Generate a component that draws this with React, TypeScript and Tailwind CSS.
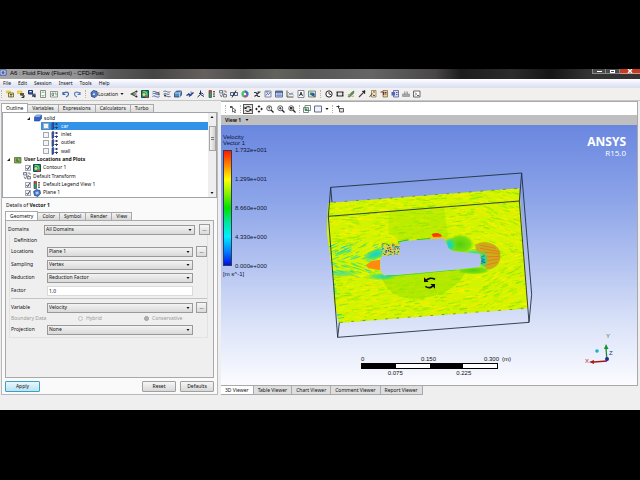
import { clsx } from 'clsx';
import type { ReactNode } from 'react';

const MENU_ITEMS = ['File', 'Edit', 'Session', 'Insert', 'Tools', 'Help'];
const OUTLINE_TABS = ['Outline', 'Variables', 'Expressions', 'Calculators', 'Turbo'];
const DETAILS_TABS = ['Geometry', 'Color', 'Symbol', 'Render', 'View'];
const VIEWER_TABS = ['3D Viewer', 'Table Viewer', 'Chart Viewer', 'Comment Viewer', 'Report Viewer'];

const BLUE = '#2f55a8';
const NAVY = '#1c2f66';

const Icon = ({ children, className }: { children: ReactNode; className?: string }) => (
  <svg
    viewBox="0 0 16 16"
    fill="none"
    strokeWidth={2}
    className={clsx('h-2 w-2 shrink-0', className)}
    aria-hidden="true"
  >
    {children}
  </svg>
);

const ICONS: Record<string, ReactNode> = {
  loadResults: (
    <>
      <path d="M1 2h8v4H1z" fill="#f2d94e" stroke="#c8a92c" strokeWidth={1} />
      <path d="M5 6h10v8H5z" fill="#f7e98b" stroke="#55502c" strokeWidth={1.5} />
      <path d="M8 9h5M10 9v5" stroke="#333" strokeWidth={1.5} />
    </>
  ),
  loadState: (
    <>
      <path d="M1 2h9v5H1z" fill="#f2d94e" stroke="#c8a92c" strokeWidth={1} />
      <path d="M6 6h8v5H6z" fill="#5b5a3a" />
      <path d="M9 10l5 4M14 10v5H9" stroke="#333" />
    </>
  ),
  saveState: (
    <>
      <path d="M1 1h8v7H1z" fill="#4a5fb0" stroke={NAVY} />
      <path d="M3 2h4v2H3z" fill="#fff" />
      <path d="M8 7h7v7H8z" fill="#5d7290" />
      <path d="M9 9l5 5M14 9v6" stroke="#222" strokeWidth={1.5} />
    </>
  ),
  refresh: (
    <>
      <path d="M3 1h10v14H3z" fill="#fff" stroke="#5c6f62" strokeWidth={1.5} />
      <path d="M5 6c2-3 5-2 6 0M11 10c-2 3-5 2-6 0" stroke="#2f8042" strokeWidth={1.5} />
    </>
  ),
  publish: (
    <>
      <path d="M1 3h14v11H1z" fill="#fff" stroke="#697a70" strokeWidth={1.5} />
      <path d="M4 6h3v5H4zM9 6h3v5" stroke="#437153" strokeWidth={1.5} />
    </>
  ),
  undo: <path d="M2 4v5h5M2 9c2-6 11-6 11-1 0 3-2 5-5 6" stroke="#3a66b5" strokeWidth={2.4} />,
  redo: <path d="M14 4v5H9M14 9C12 3 3 3 3 8c0 3 2 5 5 6" stroke="#5a80bd" strokeWidth={2.4} />,
  location: (
    <>
      <path d="M2 5l5-4 7 2 1 7-5 5-7-2z" fill="#5b8fdd" stroke={NAVY} strokeWidth={1.6} />
      <path d="M5 6h6v5H5z" fill="#d5e5fb" stroke={BLUE} strokeWidth={1.3} />
    </>
  ),
  vector: (
    <>
      <path d="M2 8l10-5M2 8l10 5M2 8h11" stroke="#222" strokeWidth={1.8} />
      <circle cx="13" cy="3" r="2" fill="#2b2b2b" />
      <circle cx="13" cy="13" r="2" fill="#2b2b2b" />
      <circle cx="3" cy="8" r="2" fill="#2f8042" />
    </>
  ),
  contour: (
    <>
      <path d="M1 1h14v14H1z" fill="#1d8c86" stroke="#144b4e" />
      <path d="M4 3c6-1 8 3 8 8" stroke="#7fd36b" strokeWidth={2.5} />
      <circle cx="6" cy="9" r="3" fill="#efda4c" />
      <path d="M9 12h5v3H9z" fill="#d64d2a" />
    </>
  ),
  streamline: (
    <>
      <path d="M1 4c5-4 8 4 14 0M1 8c5-4 8 4 14 0M1 13c5-4 8 4 14 0" stroke={BLUE} strokeWidth={1.8} />
      <path d="M7 6h7v5" stroke="#333" strokeWidth={1.5} />
    </>
  ),
  particle: (
    <>
      <path d="M1 3c5-3 8 4 14 0M1 8c5-3 8 3 12 0M5 13c3-2 6 2 10 0" stroke="#40568f" strokeWidth={1.7} />
      <circle cx="4" cy="11" r="2" fill="#333" />
    </>
  ),
  volume: (
    <>
      <path d="M1 6l4-4h10v8l-4 4H1z" fill="#4d90c8" stroke={NAVY} strokeWidth={1.4} />
      <path d="M1 6h10v8M11 6l4-4" stroke="#e4f2ff" strokeWidth={1.2} />
    </>
  ),
  text: (
    <>
      <path d="M1 11l5-3 2 3 7-6" stroke={NAVY} strokeWidth={2.4} />
      <path d="M5 6l2 8M10 3l1 8" stroke={BLUE} strokeWidth={1.8} />
    </>
  ),
  coordFrame: <path d="M7 1v8l7 4M7 9l-6 5M4 7l6-1M10 6l3 3" stroke={NAVY} strokeWidth={2} />,
  legend: (
    <>
      <path d="M2 1h5v5H2z" fill="#d3432d" />
      <path d="M2 6h5v9H2z" fill="#27a06c" />
      <path d="M2 1h5v14H2z" stroke="#333" strokeWidth={1.2} />
      <path d="M10 3h4M12 2v11M10 8h3M10 13h4" stroke="#444" strokeWidth={1.5} />
    </>
  ),
  transform: (
    <>
      <path d="M1 1h6v5H1zM9 9h6v5H9z" fill="#dfe4ee" stroke="#4b526b" strokeWidth={1.4} />
      <path d="M9 2h5v4M2 9l3 5 3-8M9 6l3 2" stroke="#5d5d6d" strokeWidth={1.5} />
    </>
  ),
  clip: (
    <>
      <path d="M1 5h6v6H1zM9 5h6v6H9z" fill="#e5ebf5" stroke={NAVY} strokeWidth={1.5} />
      <path d="M12 1L4 15" stroke="#222" strokeWidth={1.8} />
    </>
  ),
  colorMap: (
    <>
      <circle cx="8" cy="8" r="7" fill="#3cb4aa" />
      <path d="M8 8V1a7 7 0 016 10z" fill="#4066cf" />
      <path d="M8 8l6 3a7 7 0 01-9 3z" fill="#c9408c" />
      <path d="M8 8L5 14A7 7 0 018 1z" fill="#4fc063" />
      <circle cx="8" cy="8" r="2.5" fill="#f3f3f3" />
    </>
  ),
  variable: <path d="M2 5h4l4 8h4M13 4L3 13M9 4h6" stroke="#35384b" strokeWidth={2.2} />,
  expression: (
    <>
      <path d="M2 2h12v12H2z" fill="#eef1fa" stroke="#5a6894" strokeWidth={1.5} />
      <path d="M4 11l3-4 2 2 4-5M4 4h5" stroke="#34498d" strokeWidth={1.6} />
    </>
  ),
  table: (
    <>
      <path d="M1 2h14v12H1z" fill="#e8effa" stroke="#34508f" strokeWidth={1.6} />
      <path d="M1 4h14" stroke="#34508f" strokeWidth={3} />
      <path d="M6 4v10M10 4v10M1 8h14M1 11h14" stroke="#5878b5" strokeWidth={1.2} />
    </>
  ),
  chart: (
    <>
      <path d="M2 1v13h13" stroke="#333" strokeWidth={1.6} />
      <path d="M4 4l4 4 3-2 4 5M4 11c4-5 6 1 10-6" stroke="#617c9e" strokeWidth={1.5} />
    </>
  ),
  comment: (
    <>
      <path d="M2 1h12v14H2z" fill="#fff" stroke="#596380" strokeWidth={1.5} />
      <path d="M5 12l3-8 3 8M6 9h4" stroke="#222" strokeWidth={1.7} />
    </>
  ),
  figure: (
    <>
      <path d="M1 2h14v12H1z" fill="#cfe0ee" stroke="#4e7660" strokeWidth={1.5} />
      <path d="M4 5h5v5H4z" fill="#2f9b4b" />
      <circle cx="10" cy="9" r="3.5" fill="#3357a8" />
      <path d="M11 11h3v3h-3z" fill="#ce3f2e" />
    </>
  ),
  timestep: (
    <>
      <circle cx="8" cy="8" r="6.3" fill="#fff" stroke="#222" strokeWidth={2} />
      <path d="M8 4v4l4 1" stroke="#222" strokeWidth={1.8} />
    </>
  ),
  animation: (
    <>
      <path d="M1 3h14v10H1z" fill="#2d2d2d" />
      <path d="M4 5h8v6H4z" fill="#e7e7e7" />
      <path d="M1 8h2M13 8h2" stroke="#fff" strokeWidth={1.5} />
    </>
  ),
  quickEdit: (
    <>
      <path d="M2 13l8-9 4-2-1 5-8 7z" fill="#5f9360" stroke="#375337" strokeWidth={1} />
      <path d="M2 8l3 4M9 13l5-1" stroke="#c9a634" strokeWidth={2} />
    </>
  ),
  probe: (
    <>
      <path d="M2 14l8-8" stroke="#444" strokeWidth={2.2} />
      <path d="M9 2l5 5M11 5l3-4" stroke="#222" strokeWidth={3} />
    </>
  ),
  report: (
    <>
      <path d="M5 1h9v13H5z" fill="#f5e7c0" stroke="#7b6c45" strokeWidth={1.4} />
      <path d="M1 14l5-7 2 2M8 4h4M8 11h4" stroke="#5a4930" strokeWidth={1.8} />
    </>
  ),
  reportMacro: (
    <>
      <path d="M6 1h9v13H6z" fill="#e9d4a4" stroke="#705b3d" strokeWidth={1.4} />
      <path d="M1 4h6v6M9 5h4M9 8h4" stroke="#6b3228" strokeWidth={2} />
    </>
  ),
  reportView: (
    <>
      <path d="M5 1h10v13H5z" fill="#d8def6" stroke="#47549b" strokeWidth={1.5} />
      <path d="M1 4h7v7H1z" fill="#5365be" />
      <path d="M10 5h3M10 9h3" stroke="#333" strokeWidth={1.5} />
    </>
  ),
  print: (
    <>
      <path d="M1 8h14v5H1z" fill="#a9a9a9" stroke="#777" strokeWidth={1} />
      <path d="M5 8V3M8 8V3M11 8V3" stroke="#888" strokeWidth={1.5} />
    </>
  ),
  command: (
    <>
      <path d="M1 2h13v12H1z" fill="#fff" stroke="#444" strokeWidth={1.6} />
      <path d="M4 5l3 3-3 3M8 11h4" stroke="#333" strokeWidth={1.5} />
    </>
  ),
  select: (
    <>
      <path d="M2 2h5v4H2z" fill="#555" />
      <path d="M7 5l7 6-3 .5 2 3.500-2 .5-1.500-3L7 14z" fill="#fff" stroke="#333" strokeWidth={1.4} />
    </>
  ),
  rotate: (
    <>
      <path d="M3 7c0-4 7-5 10-2M13 9c0 4-7 5-10 2" stroke="#111" strokeWidth={2} />
      <path d="M1 3v5h5zM15 13V8h-5z" fill="#111" />
    </>
  ),
  pan: (
    <path
      d="M8 0l3 4H9v1H7V4H5zM8 16l3-4H9v-1H7v1H5zM0 8l4-3v2h1v2H4v2zM16 8l-4-3v2h-1v2h1v2z"
      fill="#222"
    />
  ),
  zoom: (
    <>
      <circle cx="6.500" cy="6.500" r="5" fill="#fff" stroke="#444" strokeWidth={1.7} />
      <path d="M10 10l5 5" stroke="#222" strokeWidth={2.6} />
      <path d="M6.500 4v5M5 5.500l1.500-2 1.500 2" stroke="#222" strokeWidth={1.4} />
    </>
  ),
  zoomIn: (
    <>
      <circle cx="6.500" cy="6.500" r="5" fill="#fff" stroke="#444" strokeWidth={1.7} />
      <path d="M10 10l5 5" stroke="#222" strokeWidth={2.6} />
      <path d="M6.500 4v5M4 6.500h5" stroke="#222" strokeWidth={1.6} />
    </>
  ),
  zoomFit: (
    <>
      <circle cx="6.500" cy="6.500" r="5" fill="#fff" stroke="#444" strokeWidth={1.7} />
      <path d="M10 10l5 5" stroke="#222" strokeWidth={2.6} />
      <path d="M4 4h5v5H4z" fill="#333" />
    </>
  ),
  highlight: (
    <>
      <path d="M4 1h11v10H4zM1 5h10v10H1z" stroke="#537563" strokeWidth={1.6} />
      <path d="M4 7h5v5H4z" fill="#3f8a5e" />
    </>
  ),
  viewport: <path d="M1 2h14v12H1z" fill="#f0f2fa" stroke="#555d7c" strokeWidth={1.8} />,
  deform: (
    <>
      <path d="M1 3h6M5 1v5l3 3" stroke="#333" strokeWidth={2} />
      <path d="M7 7h8v7H7z" fill="#ddd" stroke="#444" strokeWidth={1.7} />
    </>
  ),
  solid: (
    <>
      <path d="M1 6l4-4h10v7l-4 5H1z" fill="#2f62c4" stroke="#1b3d86" strokeWidth={1.2} />
      <path d="M1 6h10l4-4H5z" fill="#84aaf0" />
    </>
  ),
  boundary: (
    <>
      <path d="M2 2l3-1v13l-3 1z" fill="#3b62c4" stroke={NAVY} strokeWidth={1.4} />
      <path d="M7 4h7M7 11h7M11 2v4M11 9v5" stroke="#33406e" strokeWidth={2} />
    </>
  ),
  userLocations: (
    <>
      <path d="M1 3h13v11H1z" fill="#8bad4e" stroke="#4d5f2b" strokeWidth={1.4} />
      <circle cx="8" cy="8" r="4" fill="#3c7b38" />
      <path d="M7 6h3v4" stroke="#dbe9a8" strokeWidth={1.4} />
    </>
  ),
  plane: (
    <>
      <path d="M1 5l6-4 7 2 1 6-5 6-7-2z" fill="#3f78cf" stroke={NAVY} strokeWidth={1.2} />
      <path d="M5 6l6-1v5l-5 1z" fill="#a9cbf5" />
    </>
  ),
};

const Caret = ({ className }: { className?: string }) => (
  <svg viewBox="0 0 6 4" className={clsx('h-[2px] w-[4px]', className)} aria-hidden="true">
    <path d="M0 0h6L3 4z" fill="#111" />
  </svg>
);

const Separator = () => <span className="h-2 w-px shrink-0 border-l border-dotted border-[#b4b4b4]" />;

const ToolGroup = ({ names }: { names: string[] }) => (
  <div className="flex items-center gap-[3px]">
    {names.map((name) => (
      <button
        key={name}
        type="button"
        aria-label={name}
        className={clsx('flex', name === 'rotate' && 'bg-[#e6e6e6] outline outline-[#555]')}
      >
        <Icon>{ICONS[name]}</Icon>
      </button>
    ))}
  </div>
);

const TitleBar = () => (
  <header className="flex h-[10px] items-start justify-between overflow-hidden bg-[linear-gradient(90deg,#a5a5a8_0%,#929294_12%,#5b5b5d_17%,#454545_24%,#66605e_32%,#4d4d4d_38%,#63635c_43%,#555_48%,#656565_58%,#494747_68%,#1d1d1d_72%,#2c2c2c_80%,#151515_86%,#333_92%)]">
    <div className="flex h-[7px] items-center gap-[3px]">
      <Icon className="h-[7px] w-[7px]">
        <path d="M0 2h14v12H0z" fill="#c9d2ee" stroke="#39539c" />
        <circle cx="7" cy="8" r="3.500" fill="#4664b4" />
      </Icon>
      <h1 className="font-['Liberation_Sans',sans-serif] text-[6px] leading-[8px] whitespace-nowrap text-black">
        A6 : Fluid Flow (Fluent) - CFD-Post
      </h1>
    </div>
    <div className="flex h-[5px]">
      <button
        type="button"
        aria-label="Minimize"
        className="flex w-[14px] items-end justify-center border border-t-0 border-[#8a8a8a] bg-[#4b4b4b]"
      >
        <span className="mb-px h-px w-[5px] bg-white" />
      </button>
      <button
        type="button"
        aria-label="Maximize"
        className="flex w-[14px] items-center justify-center border border-t-0 border-l-0 border-[#8a8a8a] bg-[#4b4b4b]"
      >
        <span className="h-[3px] w-[5px] border border-white" />
      </button>
      <button
        type="button"
        aria-label="Close"
        className="flex w-5 items-center justify-center border-b border-[#d59a8c] bg-[#c43a22]"
      >
        <svg viewBox="0 0 6 4" className="h-[4px] w-[6px]" aria-hidden="true">
          <path d="M1 0l4 4M5 0L1 4" stroke="#fff" strokeWidth="1.400" />
        </svg>
      </button>
    </div>
  </header>
);

const MenuBar = () => (
  <nav className="flex h-[9px] items-center gap-[7px] bg-[linear-gradient(#ffffff,#eef0fa_40%,#d9dff1)] pl-[3px]">
    {MENU_ITEMS.map((item) => (
      <button key={item} type="button">
        {item}
      </button>
    ))}
  </nav>
);

const MainToolbar = () => (
  <div className="flex h-[13px] items-center gap-[4px] overflow-hidden border-b border-[#c6c6c6] bg-[#f1f0ee] pl-px">
    <Separator />
    <ToolGroup names={['loadResults', 'loadState', 'saveState', 'refresh', 'publish']} />
    <ToolGroup names={['undo', 'redo']} />
    <Separator />
    <button type="button" className="flex items-center">
      <Icon>{ICONS.location}</Icon>
      <span>Location</span>
      <Caret className="mx-[2px]" />
    </button>
    <ToolGroup names={['vector', 'contour', 'streamline', 'particle', 'volume']} />
    <ToolGroup names={['text', 'coordFrame', 'legend', 'transform', 'clip', 'colorMap']} />
    <ToolGroup names={['variable', 'expression', 'table', 'chart', 'comment', 'figure']} />
    <Separator />
    <ToolGroup
      names={[
        'timestep',
        'animation',
        'quickEdit',
        'probe',
        'report',
        'reportMacro',
        'reportView',
        'print',
        'command',
      ]}
    />
  </div>
);

const TabStrip = ({ tabs }: { tabs: string[] }) => (
  <div role="tablist" className="flex h-[9px] items-end">
    {tabs.map((tab, index) => (
      <button
        key={tab}
        type="button"
        role="tab"
        aria-selected={index === 0}
        className={clsx(
          'border border-b-0 border-[#a9a9a9] px-[4px]',
          index === 0 ? 'h-[9px] bg-white' : 'h-[8px] border-l-0 bg-[linear-gradient(#f3f3f3,#d9d9d9)]'
        )}
      >
        {tab}
      </button>
    ))}
  </div>
);

const TREE_ROWS = [
  { label: 'solid', icon: 'solid', indent: 'pl-[24px]', arrow: true },
  { label: 'car', icon: 'boundary', indent: 'pl-[40px]', check: false, selected: true },
  { label: 'inlet', icon: 'boundary', indent: 'pl-[40px]', check: false },
  { label: 'outlet', icon: 'boundary', indent: 'pl-[40px]', check: false },
  { label: 'wall', icon: 'boundary', indent: 'pl-[40px]', check: false },
  { label: 'User Locations and Plots', icon: 'userLocations', indent: 'pl-[4px]', arrow: true, bold: true },
  { label: 'Contour 1', icon: 'contour', indent: 'pl-[22px]', check: true },
  { label: 'Default Transform', icon: 'transform', indent: 'pl-[20px]' },
  { label: 'Default Legend View 1', icon: 'legend', indent: 'pl-[22px]', check: true },
  { label: 'Plane 1', icon: 'plane', indent: 'pl-[22px]', check: true },
];

const TreeRow = ({ row }: { row: (typeof TREE_ROWS)[number] }) => (
  <li className={clsx('relative flex h-[8px] items-center gap-[2px]', row.indent)}>
    {row.selected && <span className="absolute inset-y-0 right-0 left-[38px] bg-[#3292e8]" />}
    {row.arrow && (
      <svg viewBox="0 0 4 4" className="mr-[2px] h-[3px] w-[3px]" aria-hidden="true">
        <path d="M4 0v4H0z" fill="#222" />
      </svg>
    )}
    <label className="relative flex items-center gap-[2px] whitespace-nowrap">
      {row.check !== undefined && (
        <span className="relative flex">
          <input
            type="checkbox"
            defaultChecked={row.check}
            className="peer h-[6px] w-[6px] appearance-none border border-[#a3a8ae] bg-[#f4f4f4]"
          />
          <svg
            viewBox="0 0 6 6"
            className="pointer-events-none absolute inset-0 hidden h-[6px] w-[6px] peer-checked:block"
            aria-hidden="true"
          >
            <path d="M1.500 3l1.200 1.500L4.700 1.200" fill="none" stroke="#2c3d70" />
          </svg>
        </span>
      )}
      <Icon>{ICONS[row.icon]}</Icon>
      <span className={clsx(row.bold && 'font-bold', row.selected && 'text-white')}>{row.label}</span>
    </label>
  </li>
);

const OutlineTree = () => (
  <div className="flex h-[86px] border border-[#a0a3a8] bg-white">
    <ul className="flex min-w-0 flex-1 flex-col justify-between pt-px">
      {TREE_ROWS.map((row) => (
        <TreeRow key={row.label} row={row} />
      ))}
    </ul>
    <div className="flex w-[8px] flex-col items-center bg-[#eeeeee] py-[3px]">
      <Caret className="rotate-180" />
      <span className="mt-[8px] flex h-[25px] w-[7px] items-center justify-center border border-[#a5a5a5] bg-[linear-gradient(90deg,#f5f5f5,#cfcfcf)]">
        <span className="h-[3px] w-[3px] border-y border-[#777]" />
      </span>
      <Caret className="mt-auto" />
    </div>
  </div>
);

interface FieldProps {
  label: string;
  value: string;
  more?: boolean;
  wide?: boolean;
}

const MoreButton = ({ label }: { label: string }) => (
  <button
    type="button"
    aria-label={`${label} options`}
    className="h-[11px] w-[11px] shrink-0 border border-[#9c9c9c] bg-[linear-gradient(#f6f6f6,#dadada)]"
  >
    ...
  </button>
);

const SelectField = ({ label, value, more, wide }: FieldProps) => {
  const id = `field-${label.toLowerCase()}`;
  return (
    <div className="flex h-[11px] items-center">
      <label htmlFor={id} className="w-[36px] shrink-0">
        {label}
      </label>
      <div className="relative flex min-w-0 flex-1">
        <select
          id={id}
          className="h-[10px] w-full appearance-none border border-[#999] bg-[linear-gradient(#f3f3f3,#d9d9d9)] pl-px"
        >
          <option>{value}</option>
        </select>
        <Caret className="pointer-events-none absolute top-[4px] right-[3px]" />
      </div>
      <div className={clsx('flex shrink-0 justify-end', wide ? 'w-[15px]' : 'w-[14px]')}>
        {more && <MoreButton label={label} />}
      </div>
    </div>
  );
};

const DetailsPanel = () => (
  <section className="px-[3px]">
    <h2 className="pt-[4px] pb-[2px] pl-px leading-[7px]">
      Details of <b>Vector 1</b>
    </h2>
    <TabStrip tabs={DETAILS_TABS} />
    <div className="flex h-[158px] flex-col border border-[#a9a9a9] bg-[#f0efef] pt-[3px] pr-[3px] pl-[2px]">
      <SelectField label="Domains" value="All Domains" more wide />
      <fieldset className="mr-[2px] ml-px flex flex-col border border-t-0 border-[#e2e2e2] pb-[2px] pl-px">
        <legend className="float-left w-full pt-px pl-[3px] leading-[9px]">Definition</legend>
        <div className="flex flex-col gap-[2px] pt-px">
          <SelectField label="Locations" value="Plane 1" more />
          <SelectField label="Sampling" value="Vertex" />
          <SelectField label="Reduction" value="Reduction Factor" />
          <div className="flex h-[11px] items-center pr-[14px]">
            <label htmlFor="factor" className="w-[36px] shrink-0">
              Factor
            </label>
            <input
              id="factor"
              defaultValue="1.0"
              className="h-[10px] min-w-0 flex-1 border border-[#dadada] bg-white pl-px"
            />
          </div>
        </div>
        <hr className="mt-[2px] mb-[3px] border-[#c4c4c4]" />
        <SelectField label="Variable" value="Velocity" more />
        <div className="flex h-[11px] items-center text-[#9a9a9a]">
          <span className="w-[67px]">Boundary Data</span>
          <label className="flex w-[66px] items-center gap-[3px]">
            <input
              type="radio"
              name="boundary"
              disabled
              className="h-[5px] w-[5px] appearance-none rounded-full border border-[#c2c2c2]"
            />
            Hybrid
          </label>
          <label className="flex items-center gap-[3px]">
            <input
              type="radio"
              name="boundary"
              disabled
              defaultChecked
              className="h-[5px] w-[5px] appearance-none rounded-full border border-[#a0a0a0] bg-[#b0b0b0]"
            />
            Conservative
          </label>
        </div>
        <SelectField label="Projection" value="None" />
      </fieldset>
    </div>
    <div className="flex gap-[4px] pt-[3px] pb-[2px]">
      <button
        type="button"
        className="mr-auto h-[11px] w-[35px] rounded-[1px] border border-[#3c9fc4] bg-[linear-gradient(#e9f8fe,#b9e2f2)]"
      >
        Apply
      </button>
      <button
        type="button"
        className="h-[11px] w-[34px] rounded-[1px] border border-[#a0a0a0] bg-[linear-gradient(#f6f6f6,#d8d8d8)]"
      >
        Reset
      </button>
      <button
        type="button"
        className="h-[11px] w-[34px] rounded-[1px] border border-[#a0a0a0] bg-[linear-gradient(#f6f6f6,#d8d8d8)]"
      >
        Defaults
      </button>
    </div>
  </section>
);

const ViewToolbar = () => (
  <div className="flex h-[13px] items-center gap-[3px] bg-white pl-[4px]">
    <Separator />
    <ToolGroup names={['select']} />
    <Separator />
    <ToolGroup names={['rotate', 'pan', 'zoom', 'zoomIn', 'zoomFit']} />
    <Separator />
    <ToolGroup names={['highlight']} />
    <button type="button" aria-label="viewport layout" className="flex items-center gap-[3px]">
      <Icon>{ICONS.viewport}</Icon>
      <Caret />
    </button>
    <Separator />
    <ToolGroup names={['deform']} />
  </div>
);

const LEGEND_VALUES = ['1.732e+001', '1.299e+001', '8.660e+000', '4.330e+000', '0.000e+000'];

const VelocityLegend = () => (
  <div className="absolute top-[9px] left-[2px] text-[6px] leading-[6px] text-[#0d1533]">
    <p>Velocity</p>
    <p>Vector 1</p>
    <div className="flex gap-[3px] pt-[4px]">
      <div className="h-[116px] w-[9px] border border-[#333b52] bg-[linear-gradient(#ff1a00,#ff8c00_13%,#ffff00_25%,#80f000_38%,#00e000_50%,#00e8a0_63%,#00f0ff_75%,#0080ff_88%,#0010e0)]" />
      <ol className="-my-[3px] flex flex-col justify-between">
        {LEGEND_VALUES.map((value) => (
          <li key={value}>{value}</li>
        ))}
      </ol>
    </div>
    <p className="pt-[5px]">[m s^-1]</p>
  </div>
);

// small fixed-seed generator, keeps the arrows stable between renders
const makeRandom = (seed: number) => () => {
  seed = (seed * 16807) % 2147483647;
  return seed / 2147483647;
};

const buildArrows = () => {
  const random = makeRandom(41);
  const colors = ['#fff200', '#f4f000', '#e8f400', '#9cea00', '#a4ee00', '#80e408', '#ffe800', '#f8f400'];
  return Array.from({ length: 2600 }, () => {
    const x = 22 + random() * 600;
    const y = 66 + random() * 412;
    const wake = x < 190 && y > 232 && y < 335;
    const length = 8 + random() * 16;
    let tilt = 0.07;
    let color = colors[Math.floor(random() * colors.length)];
    if (wake) {
      tilt = y < 285 ? 0.4 : -0.3;
      if (random() > 0.6) color = random() > 0.3 ? '#35e27a' : '#1fd3cf';
    } else if (x > 480) {
      tilt = y < 270 ? -0.3 : 0.35;
    } else if (y > 330) {
      tilt = 0.15;
    }
    if (x < 60 && y > 240 && random() > 0.7) color = '#14dba0';
    return { x, y, length, tilt, color };
  });
};

const ARROWS = buildArrows();

const buildSpecks = () => {
  const random = makeRandom(977);
  const colors = ['#1540c8', '#13a6d8', '#2b9b43', '#e04010', '#203060', '#30d8d0'];
  return Array.from({ length: 70 }, () => ({
    x: 184 + random() * 54,
    y: 234 + random() * 36,
    color: colors[Math.floor(random() * colors.length)],
  }));
};

const SPECKS = buildSpecks();

const VectorPlot = () => (
  <svg
    viewBox="0 0 660 540"
    className="absolute top-[40px] left-[99px] h-[180px] w-[220px]"
    role="img"
    aria-label="Velocity vectors around the car"
  >
    <defs>
      <clipPath id="flow">
        <path
          clipRule="evenodd"
          d="M24 114L598 70 624 430 56 474 42 410 38 330 20 200zM238 232L260 227 371 220 381 236 385 249 398 257 478 267 484 286 478 307 420 313 310 323 232 330 192 331 182 320 180 286 186 273 238 268z"
        />
      </clipPath>
      <radialGradient id="cyanGlow">
        <stop offset="0" stopColor="#10cfe0" />
        <stop offset="0.500" stopColor="#1fd9a0" stopOpacity="0.800" />
        <stop offset="1" stopColor="#60e040" stopOpacity="0" />
      </radialGradient>
      <radialGradient id="greenGlow">
        <stop offset="0" stopColor="#4fcf10" />
        <stop offset="0.750" stopColor="#64dc10" stopOpacity="0.800" />
        <stop offset="1" stopColor="#80e010" stopOpacity="0" />
      </radialGradient>
    </defs>
    <g clipPath="url(#flow)">
      <rect width="660" height="540" fill="#d2f400" />
      {ARROWS.map((arrow, index) => (
        <path
          key={`arrow-${index}`}
          d={`M${arrow.x} ${arrow.y}l${arrow.length} ${-arrow.length * arrow.tilt}`}
          stroke={arrow.color}
          strokeWidth="3"
          opacity="0.700"
        />
      ))}
      <path d="M208 135L370 122 385 215 240 226 205 205z" fill="#98e400" opacity="0.400" />
      <path d="M185 333L440 312C420 375 340 402 270 400 225 396 192 372 185 333z" fill="#90e000" opacity="0.500" />
      <ellipse cx="165" cy="268" rx="42" ry="17" fill="url(#cyanGlow)" transform="rotate(-24 165 268)" />
      <ellipse cx="65" cy="325" rx="60" ry="12" fill="url(#cyanGlow)" opacity="0.600" />
      <ellipse cx="185" cy="335" rx="50" ry="12" fill="url(#cyanGlow)" opacity="0.800" />
      <ellipse cx="420" cy="238" rx="42" ry="30" fill="url(#greenGlow)" />
      <ellipse cx="388" cy="240" rx="22" ry="26" fill="url(#cyanGlow)" />
      <ellipse cx="465" cy="262" rx="36" ry="9" fill="url(#cyanGlow)" opacity="0.800" />
      <ellipse cx="460" cy="316" rx="50" ry="12" fill="url(#greenGlow)" />
      <path d="M466 240C485 225 525 230 538 255 550 285 530 315 500 313L488 300 486 268 468 256z" fill="#c9a020" opacity="0.850" />
      <path
        d="M478 240l50 10M480 250l58 10M492 262l48 4M494 276l46-2M496 288l40-6M498 300l34-8"
        stroke="#e87c18"
        strokeWidth="3"
      />
      <ellipse cx="489" cy="284" rx="17" ry="29" fill="url(#cyanGlow)" />
      <path d="M335 208C345 202 358 202 366 212L362 217 340 217z" fill="#ff3a00" />
      <path d="M325 217l50-4 8 8-50 6z" fill="#ffb400" opacity="0.500" />
      <path d="M138 300L155 288 180 284 181 315 145 310z" fill="#ff8a10" />
      <path d="M234 231l32-6M290 225l40-4" stroke="#28c040" strokeWidth="4" />
      <path d="M200 333l60-5 60-6 90-8" stroke="#38cc60" strokeWidth="4" fill="none" />
      <path d="M184 250l14-10 42-6v36l-30-2-22 8z" fill="#ded24a" />
      {SPECKS.map((speck, index) => (
        <rect
          key={`speck-${index}`}
          x={speck.x}
          y={speck.y}
          width="4"
          height="3"
          fill={speck.color}
        />
      ))}
      <path d="M482 280l12 4-12 4 14 4-14 3M484 276l10-4" stroke="#1b5a80" strokeWidth="2" fill="none" />
    </g>
    <g fill="none" stroke="#1c2b38" strokeWidth="2.600" strokeLinejoin="round">
      <path d="M32 67L605 24 635 388 627 472 53 517 25 154z" />
      <path d="M25 154L598 108 605 24M598 108L627 472M32 67L36 112M53 517L58 473" />
      <path d="M60 472L620 430M40 112L596 70" stroke="#3f7d30" strokeWidth="2" strokeDasharray="8 26" />
    </g>
    <g fill="none" stroke="#111" strokeWidth="5">
      <path d="M316 350c6-12 20-12 29-7M341 358c-4 12-16 12-25 6" />
      <path d="M312 337v14h14zM345 371v-14h-14z" fill="#111" stroke="none" />
    </g>
  </svg>
);

const ScaleBar = () => (
  <div className="absolute top-[231px] left-[140px] w-[137px] text-[6px] leading-[7px] text-[#111]">
    <div className="flex justify-between whitespace-nowrap">
      <span className="w-[12px]">0</span>
      <span>0.150</span>
      <span className="flex w-[14px] gap-[3px]">
        <span>0.300</span>
        <span>(m)</span>
      </span>
    </div>
    <div className="mb-px grid h-[6px] grid-cols-4 border border-black">
      <span className="bg-black" />
      <span className="bg-white" />
      <span className="bg-black" />
      <span className="bg-white" />
    </div>
    <div className="grid grid-cols-2 text-center">
      <span>0.075</span>
      <span>0.225</span>
    </div>
  </div>
);

const Triad = () => (
  <svg
    viewBox="0 0 30 34"
    className="absolute right-[22px] bottom-[18px] h-[34px] w-[30px]"
    role="img"
    aria-label="Axis orientation"
  >
    <path d="M22 28L21 15" stroke="#1c8c2c" strokeWidth="1.300" />
    <path d="M21 11l2.500 5h-4.500z" fill="#169228" />
    <path d="M22 28L9 29" stroke="#a01818" strokeWidth="1.300" />
    <path d="M4 29l5-2v4z" fill="#b01616" />
    <circle cx="22" cy="26" r="2" fill="#18309c" />
    <circle cx="12" cy="18" r="1.800" fill="#16b4c8" />
    <g fontSize="6" fontFamily="Liberation Sans, sans-serif">
      <text x="0" y="30" fill="#b03030">
        X
      </text>
      <text x="21" y="5" fill="#228030">
        Y
      </text>
      <text x="24" y="22" fill="#28387c">
        Z
      </text>
    </g>
  </svg>
);

const Viewer = () => (
  <section className="flex min-w-0 flex-1 flex-col">
    <div className="border-t border-r border-[#a9a9a9]">
      <ViewToolbar />
      <button
        type="button"
        className="flex h-[10px] w-full items-center gap-[4px] bg-[#bfbfbf] pl-[4px] font-bold"
      >
        View 1 <Caret />
      </button>
      <div className="relative h-[261px] overflow-hidden border-b border-[#a9a9a9] bg-[linear-gradient(#6a87e0,#8ba3e8_28%,#b6c5f1_55%,#dde4f9_78%,#fbfcff)] font-['Liberation_Sans',sans-serif]">
        <VelocityLegend />
        <VectorPlot />
        <ScaleBar />
        <Triad />
        <div className="absolute top-[11px] right-[11px] text-right font-['Open_Sans',sans-serif] text-white">
          <p className="text-[12px] leading-[12px] font-bold">ANSYS</p>
          <p className="pt-px text-[8px] leading-[8px]">R15.0</p>
        </div>
      </div>
    </div>
    <div role="tablist" className="flex h-[9px] items-start">
      {VIEWER_TABS.map((tab, index) => (
        <button
          key={tab}
          type="button"
          role="tab"
          aria-selected={index === 0}
          className={clsx(
            'h-[9px] border-r border-b border-[#a9a9a9] px-[4px] whitespace-nowrap',
            index === 0 ? 'bg-white' : 'bg-[#dedede]'
          )}
        >
          {tab}
        </button>
      ))}
    </div>
  </section>
);

const App = () => (
  <div className="min-h-screen bg-black pt-[69px] font-['Noto_Sans',sans-serif] text-[5px] leading-[7px] text-[#111]">
    <TitleBar />
    <MenuBar />
    <MainToolbar />
    <main className="flex gap-[2px] bg-[#f0efef] pr-[2px] pb-[15px]">
      <aside className="w-[219px] shrink-0 px-px pt-[2px]">
        <TabStrip tabs={OUTLINE_TABS} />
        <div className="border border-t-0 border-[#b9b9b9] bg-[#fafafa]">
          <OutlineTree />
          <DetailsPanel />
        </div>
      </aside>
      <Viewer />
    </main>
  </div>
);

export default App;
